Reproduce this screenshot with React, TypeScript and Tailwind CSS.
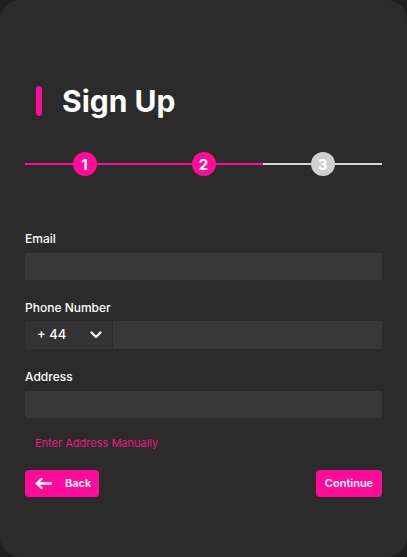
import React from "react";

const PINK = "bg-[#ff0a99]";

function Step({ n, active }: { n: number; active: boolean }) {
  const line = active ? "bg-[#ff0a99]" : "bg-[#d6d6d6]";
  const circle = active ? "bg-[#ff0a99]" : "bg-[#d0d0d0]";
  return (
    <div className="flex flex-1 items-center">
      <div className={`h-[2px] flex-1 ${line}`} />
      <div
        className={`flex h-[24px] w-[24px] items-center justify-center rounded-full ${circle} text-[15px] font-bold leading-none text-white`}
      >
        {n}
      </div>
      <div className={`h-[2px] flex-1 ${line}`} />
    </div>
  );
}

export default function App() {
  return (
    <div className="h-[557px] w-[407px] bg-[#1f1f1f]" style={{ fontFamily: "Inter, 'Liberation Sans', sans-serif" }}>
      <div className="flex h-full w-full flex-col rounded-[20px] bg-[#2b2b2b] px-[25px] pt-[86px]">
        <div className="flex h-[30px] items-center pl-[11px]">
          <div className={`h-[30px] w-[6px] rounded-full ${PINK}`} />
          <h1 className="ml-[20px] text-[30px] font-bold leading-none text-white">Sign Up</h1>
        </div>

        <div className="mt-[36px] flex">
          <Step n={1} active />
          <Step n={2} active />
          <Step n={3} active={false} />
        </div>

        <label className="mt-[55px] text-[12px] font-medium leading-[16px] text-white">Email</label>
        <div className="mt-[6px] h-[27px] w-full rounded-[2px] bg-[#383838]" />

        <label className="mt-[20px] text-[12px] font-medium leading-[16px] text-white">Phone Number</label>
        <div className="mt-[5px] flex h-[28px] w-full rounded-[2px] bg-[#383838]">
          <div className="flex w-[88px] items-center justify-between border-r border-[#2a2a2a] bg-[#333333] pl-[12px] pr-[10px]">
            <span className="text-[13px] font-medium text-white">+ 44</span>
            <svg width="12" height="8" viewBox="0 0 12 8" fill="none">
              <path d="M1.5 1.5 L6 6 L10.5 1.5" stroke="white" strokeWidth="2.2" strokeLinecap="round" strokeLinejoin="round" />
            </svg>
          </div>
          <div className="flex-1" />
        </div>

        <label className="mt-[20px] text-[12px] font-medium leading-[16px] text-white">Address</label>
        <div className="mt-[6px] h-[27px] w-full rounded-[2px] bg-[#383838]" />

        <div className="mt-[18px] pl-[10px] text-[11px] leading-[14px] text-[#f0158a]">Enter Address Manually</div>

        <div className="mt-[20px] flex items-center justify-between">
          <button className={`flex h-[27px] w-[74px] items-center rounded-[4px] ${PINK} pl-[10px] text-[11px] font-semibold text-white`}>
            <svg width="17" height="11" viewBox="0 0 17 11" fill="none">
              <path d="M16 5.5 H1.8 M6.5 1 L1.8 5.5 L6.5 10" stroke="white" strokeWidth="2.4" strokeLinecap="round" strokeLinejoin="round" />
            </svg>
            <span className="ml-[13px]">Back</span>
          </button>
          <button className={`flex h-[27px] w-[66px] items-center justify-center rounded-[4px] ${PINK} text-[11px] font-semibold text-white`}>
            Continue
          </button>
        </div>
      </div>
    </div>
  );
}
